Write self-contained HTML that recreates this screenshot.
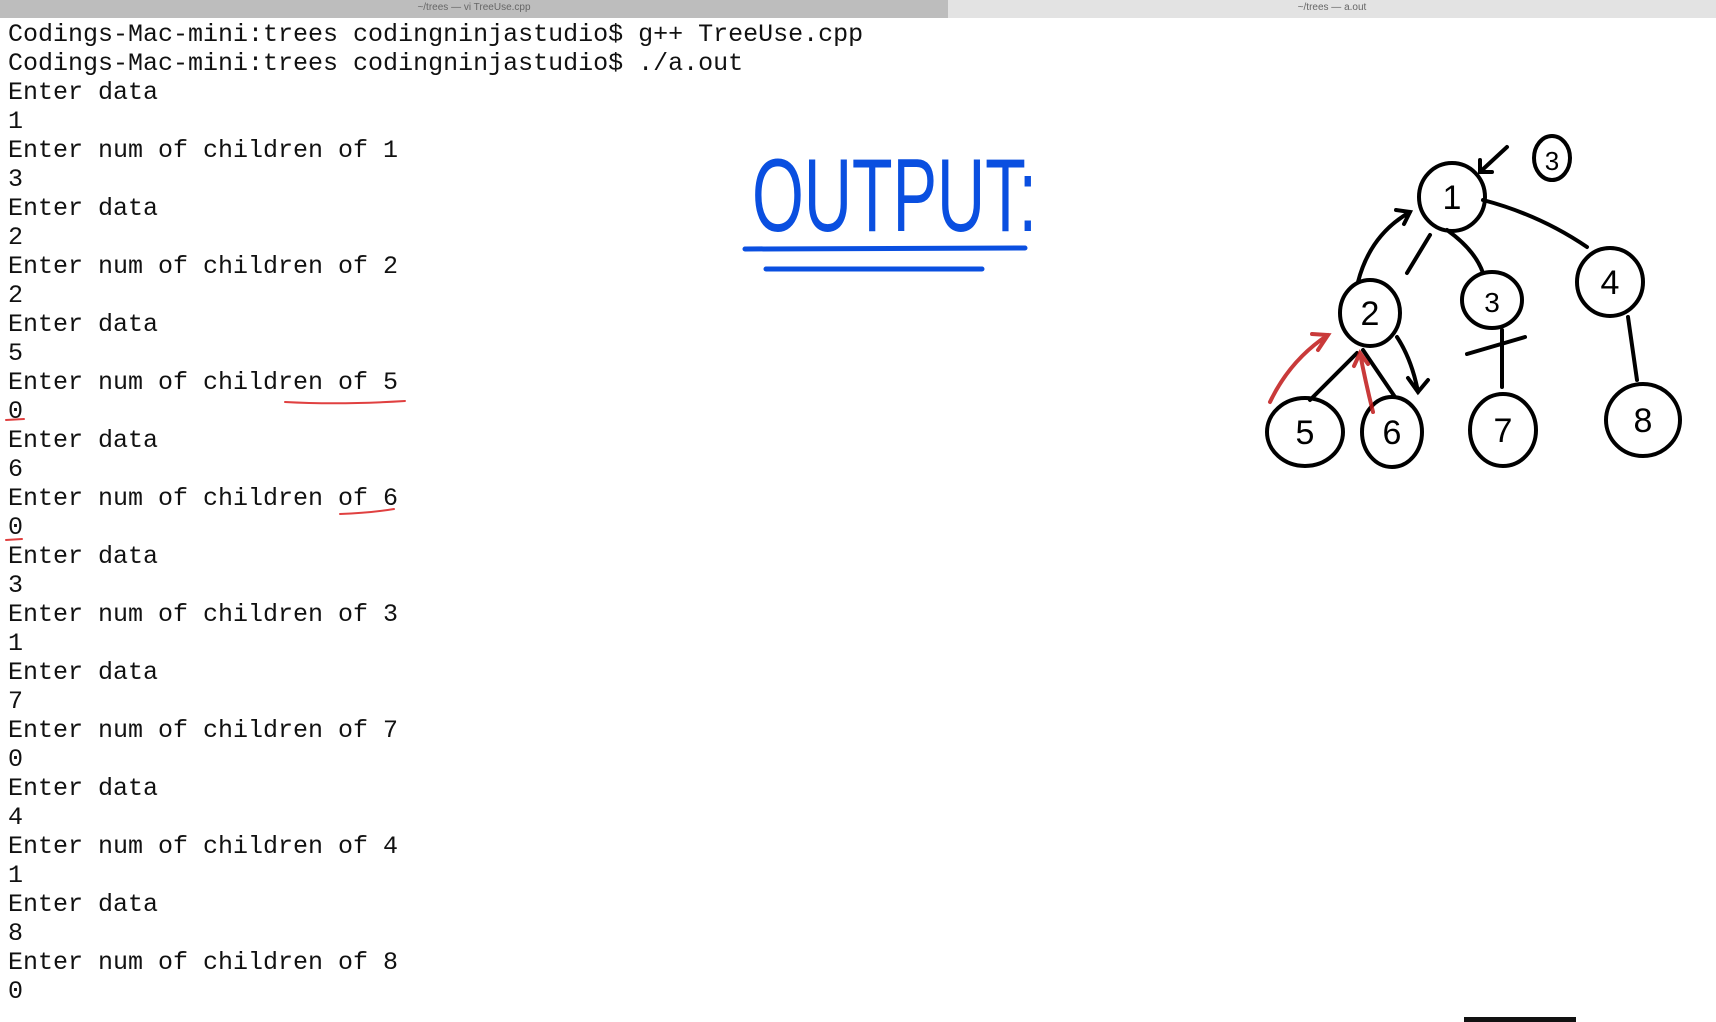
<!DOCTYPE html>
<html><head><meta charset="utf-8"><style>
html,body{margin:0;padding:0;}
body{width:1716px;height:1022px;background:#fff;position:relative;overflow:hidden;}
.bar{position:absolute;top:0;height:18px;font:10px "Liberation Sans",sans-serif;color:#666;text-align:center;line-height:16px;}
pre{position:absolute;left:8px;top:20px;margin:0;font-family:"Liberation Mono",monospace;font-size:25px;line-height:29px;color:#111;}
svg{position:absolute;left:0;top:0;}
</style></head><body>
<div class="bar" style="left:0;width:948px;background:#bdbdbd;">~/trees — vi TreeUse.cpp</div>
<div class="bar" style="left:948px;width:768px;background:#e3e3e3;">~/trees — a.out</div>
<pre>Codings-Mac-mini:trees codingninjastudio$ g++ TreeUse.cpp
Codings-Mac-mini:trees codingninjastudio$ ./a.out
Enter data
1
Enter num of children of 1
3
Enter data
2
Enter num of children of 2
2
Enter data
5
Enter num of children of 5
0
Enter data
6
Enter num of children of 6
0
Enter data
3
Enter num of children of 3
1
Enter data
7
Enter num of children of 7
0
Enter data
4
Enter num of children of 4
1
Enter data
8
Enter num of children of 8
0</pre>
<svg width="1716" height="1022" viewBox="0 0 1716 1022">
<g stroke="#e04040" stroke-width="2" fill="none" stroke-linecap="round">
<path d="M285 402 Q340 405 405 401"/><path d="M6 420 L24 419"/>
<path d="M340 514 Q370 513 394 509"/><path d="M6 540 L22 539"/>
</g>
<text x="752" y="231" font-family="Liberation Sans,sans-serif" font-size="104" fill="#0a4fe0" textLength="285" lengthAdjust="spacingAndGlyphs">OUTPUT:</text>
<g stroke="#0a4fe0" stroke-width="5" stroke-linecap="round">
<line x1="745" y1="249" x2="1025" y2="248"/><line x1="766" y1="269" x2="982" y2="269"/>
</g>
<g stroke="#000" stroke-width="4" fill="none" stroke-linecap="round">
<ellipse cx="1452" cy="197" rx="33" ry="34"/>
<ellipse cx="1552" cy="158" rx="18" ry="22"/>
<ellipse cx="1370" cy="313" rx="30" ry="33"/>
<ellipse cx="1492" cy="300" rx="30" ry="28"/>
<ellipse cx="1610" cy="282" rx="33" ry="34"/>
<ellipse cx="1305" cy="432" rx="38" ry="34"/>
<ellipse cx="1392" cy="432" rx="30" ry="35"/>
<ellipse cx="1503" cy="430" rx="33" ry="36"/>
<ellipse cx="1643" cy="420" rx="37" ry="36"/>
<path d="M1483 200 Q1540 215 1587 247"/>
<path d="M1447 230 Q1475 250 1483 273"/>
<path d="M1430 235 L1407 273"/>
<path d="M1358 282 Q1370 235 1410 212 M1396 210 L1410 212 L1404 224"/>
<path d="M1357 353 L1310 400"/>
<path d="M1363 350 L1395 397"/>
<path d="M1397 337 Q1412 360 1418 392 M1408 378 L1418 392 L1428 380"/>
<path d="M1502 330 L1502 387 M1467 354 L1525 337"/>
<path d="M1628 317 L1637 380"/>
<path d="M1507 147 L1480 172 M1480 160 L1480 172 L1492 172"/>
</g>
<g stroke="#c01818" stroke-width="4" fill="none" stroke-linecap="round" opacity="0.85">
<path d="M1270 402 Q1290 360 1328 335 M1312 334 L1328 335 L1318 350"/>
<path d="M1373 412 Q1365 380 1360 353 M1354 366 L1360 353 L1368 364"/>
</g>
<g font-family="Liberation Sans,sans-serif" font-size="34" fill="#000" text-anchor="middle">
<text x="1452" y="209">1</text><text x="1552" y="170" font-size="26">3</text>
<text x="1370" y="325">2</text><text x="1492" y="312" font-size="28">3</text>
<text x="1610" y="294">4</text><text x="1305" y="444">5</text>
<text x="1392" y="444">6</text><text x="1503" y="442">7</text><text x="1643" y="432">8</text>
</g>
<rect x="1464" y="1017" width="112" height="5" fill="#111"/>
</svg>
</body></html>
